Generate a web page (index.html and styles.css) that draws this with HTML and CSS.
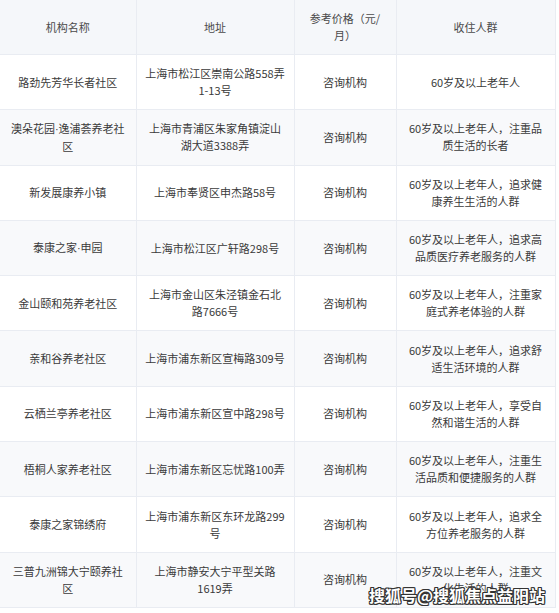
FILE: index.html
```html
<!DOCTYPE html>
<html lang="zh-CN">
<head>
<meta charset="utf-8">
<link rel="stylesheet" href="styles.css">
</head>
<body>
<div class="page">
<table class="tbl">
<colgroup>
<col class="c1"><col class="c2"><col class="c3"><col class="c4">
</colgroup>
<thead>
<tr><th>机构名称</th><th>地址</th><th>参考价格（元/月）</th><th>收住人群</th></tr>
</thead>
<tbody>
<tr><td>路劲先芳华长者社区</td><td>上海市松江区崇南公路558弄1-13号</td><td>咨询机构</td><td>60岁及以上老年人</td></tr>
<tr><td>澳朵花园<span class="dot">·</span>逸浦荟养老社区</td><td>上海市青浦区朱家角镇淀山湖大道3388弄</td><td>咨询机构</td><td>60岁及以上老年人，注重品质生活的长者</td></tr>
<tr><td>新发展康养小镇</td><td>上海市奉贤区申杰路58号</td><td>咨询机构</td><td>60岁及以上老年人，追求健康养生生活的人群</td></tr>
<tr><td>泰康之家<span class="dot">·</span>申园</td><td>上海市松江区广轩路298号</td><td>咨询机构</td><td>60岁及以上老年人，追求高品质医疗养老服务的人群</td></tr>
<tr><td>金山颐和苑养老社区</td><td>上海市金山区朱泾镇金石北路7666号</td><td>咨询机构</td><td>60岁及以上老年人，注重家庭式养老体验的人群</td></tr>
<tr><td>亲和谷养老社区</td><td>上海市浦东新区宣梅路309号</td><td>咨询机构</td><td>60岁及以上老年人，追求舒适生活环境的人群</td></tr>
<tr><td>云栖兰亭养老社区</td><td>上海市浦东新区宣中路298号</td><td>咨询机构</td><td>60岁及以上老年人，享受自然和谐生活的人群</td></tr>
<tr><td>梧桐人家养老社区</td><td>上海市浦东新区忘忧路100弄</td><td>咨询机构</td><td>60岁及以上老年人，注重生活品质和便捷服务的人群</td></tr>
<tr><td>泰康之家锦绣府</td><td>上海市浦东新区东环龙路299号</td><td>咨询机构</td><td>60岁及以上老年人，追求全方位养老服务的人群</td></tr>
<tr><td>三普九洲锦大宁颐养社区</td><td>上海市静安大宁平型关路1619弄</td><td>咨询机构</td><td>60岁及以上老年人，注重文化生活的人群</td></tr>
</tbody>
</table>
<div class="watermark">搜狐号@搜狐焦点益阳站</div>
</div>
</body>
</html>
```
FILE: styles.css
```css
html, body {
  margin: 0;
  padding: 0;
  background: #ffffff;
}
.page {
  position: relative;
  width: 559px;
  height: 613px;
  overflow: hidden;
}
.tbl {
  width: 555px;
  border-collapse: collapse;
  table-layout: fixed;
  font-family: "Noto Sans CJK SC", "Noto Sans", sans-serif;
  font-size: 11px;
  line-height: 17px;
  color: #3a3a3a;
}
.c1 { width: 136px; }
.c2 { width: 158px; }
.c3 { width: 102px; }
.c4 { width: 159px; }
.tbl th, .tbl td {
  padding: 0 8px;
  text-align: center;
  vertical-align: middle;
  border-bottom: 1px solid #e9ecf2;
  border-right: 1px solid #e9ecf2;
  word-break: normal;
}
.tbl th {
  height: 54px;
  font-weight: normal;
  background: #f5f7fa;
  color: #4a4a4a;
}
.tbl td {
  height: 54.3px;
}
.tbl tbody tr:nth-child(even) td {
  background: #f8f9fb;
}
.dot {
  font-family: "Liberation Sans", sans-serif;
}
.watermark {
  position: absolute;
  right: 14px;
  bottom: 6px;
  font-family: "Noto Sans CJK SC", sans-serif;
  font-size: 16px;
  font-weight: bold;
  color: #ffffff;
  text-shadow: 1px 1px 0 #333, -1px -1px 0 #333, 1px -1px 0 #333, -1px 1px 0 #333, 0 1px 0 #333, 0 -1px 0 #333, 1px 0 0 #333, -1px 0 0 #333;
}
```
